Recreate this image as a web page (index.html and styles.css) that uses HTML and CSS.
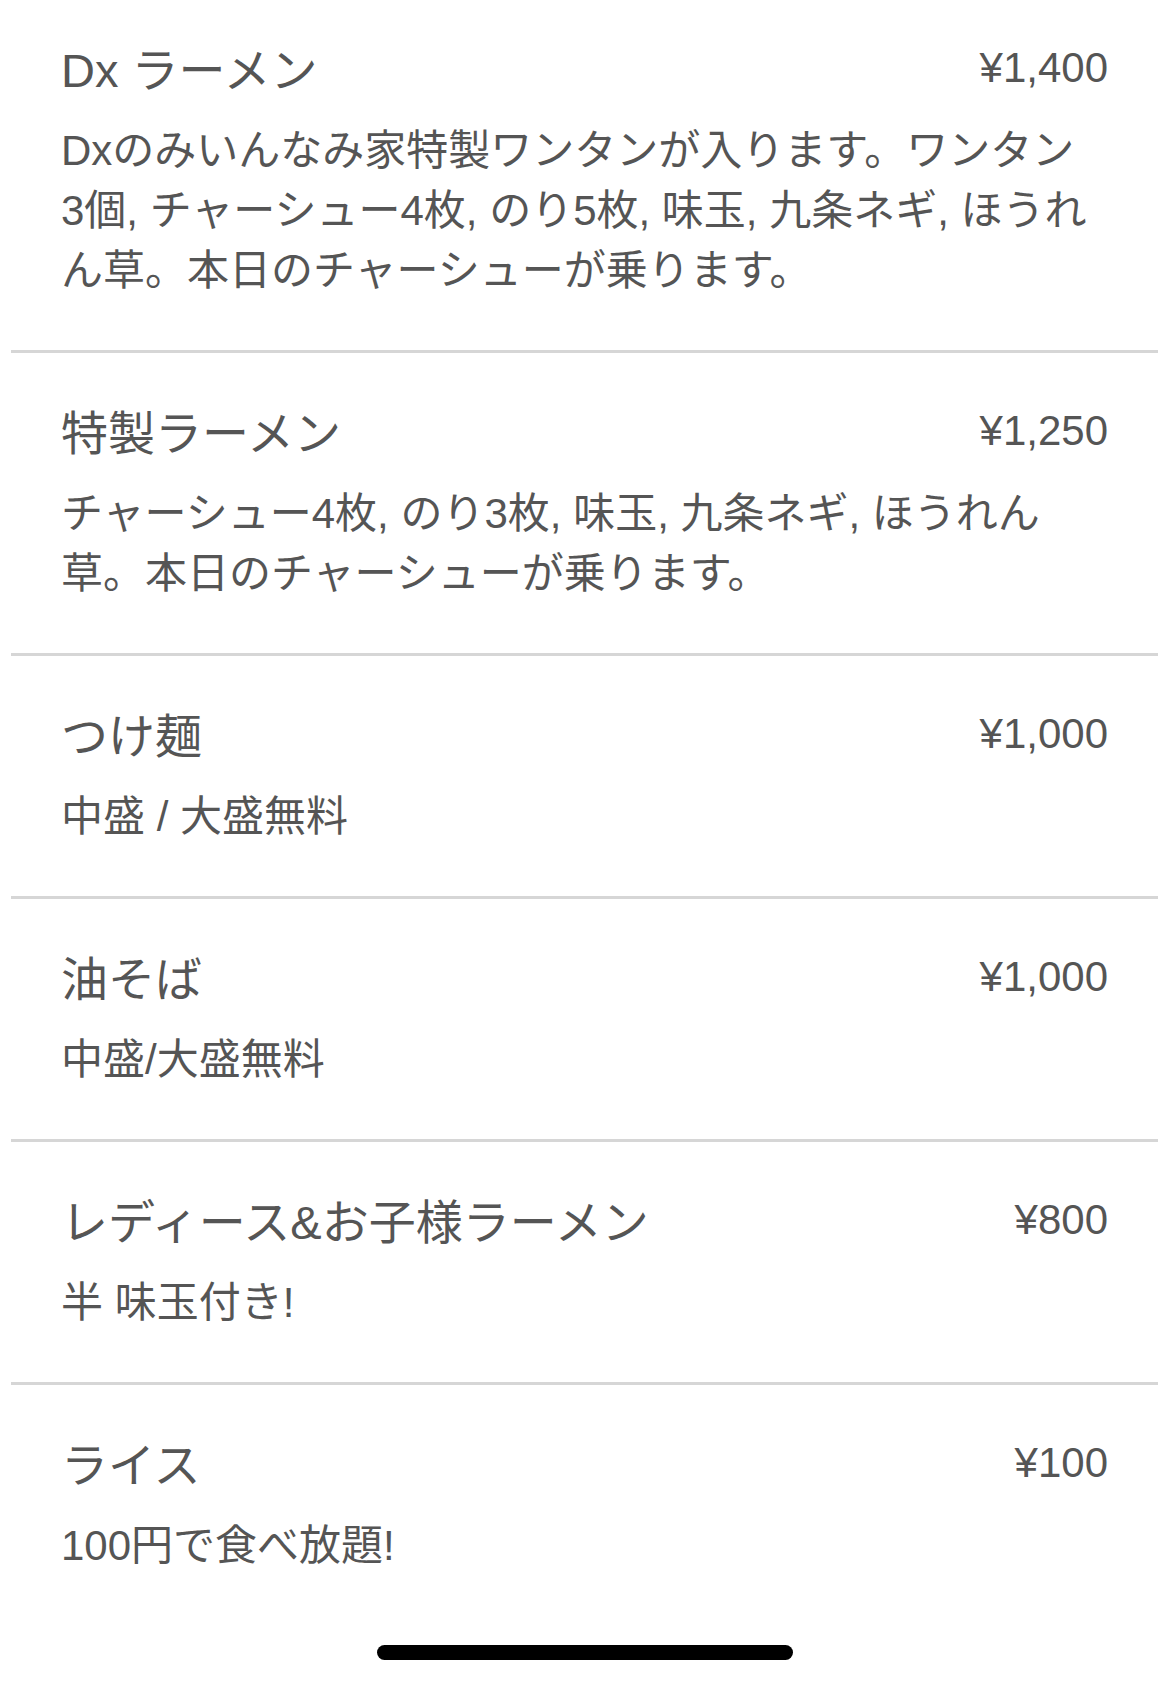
FILE: index.html
```html
<!DOCTYPE html>
<html lang="ja">
<head>
    <meta charset="UTF-8">
    <title>メニュー</title>
    <link rel="stylesheet" href="styles.css">
</head>
<body>
    <ul class="menu">
        <li class="item first">
            <div class="row">
                <span class="name">Dx ラーメン</span>
                <span class="price">¥1,400</span>
            </div>
            <p class="desc">Dxのみいんなみ家特製ワンタンが入ります。ワンタン3個, チャーシュー4枚, のり5枚, 味玉, 九条ネギ, ほうれん草。本日のチャーシューが乗ります。</p>
        </li>
        <li class="item">
            <div class="row">
                <span class="name">特製ラーメン</span>
                <span class="price">¥1,250</span>
            </div>
            <p class="desc">チャーシュー4枚, のり3枚, 味玉, 九条ネギ, ほうれん草。本日のチャーシューが乗ります。</p>
        </li>
        <li class="item">
            <div class="row">
                <span class="name">つけ麺</span>
                <span class="price">¥1,000</span>
            </div>
            <p class="desc">中盛 / 大盛無料</p>
        </li>
        <li class="item">
            <div class="row">
                <span class="name">油そば</span>
                <span class="price">¥1,000</span>
            </div>
            <p class="desc">中盛/大盛無料</p>
        </li>
        <li class="item">
            <div class="row">
                <span class="name">レディース&amp;お子様ラーメン</span>
                <span class="price">¥800</span>
            </div>
            <p class="desc">半 味玉付き!</p>
        </li>
        <li class="item last">
            <div class="row">
                <span class="name">ライス</span>
                <span class="price">¥100</span>
            </div>
            <p class="desc">100円で食べ放題!</p>
        </li>
    </ul>

    <div class="home-bar"></div>
</body>
</html>
```

FILE: styles.css
```css
html, body {
    margin: 0;
    padding: 0;
    background: #fff;
    color: #555;
    font-family: "Liberation Sans", "Noto Sans CJK JP", sans-serif;
    overflow: hidden;
}

.menu {
    list-style: none;
    margin: 0 12px 0 11px;
    padding: 0;
}

.item {
    padding: 51px 50px 49px;
    border-bottom: 3px solid #d6d6d6;
}

.item.first {
    padding-top: 41px;
}

.item.last {
    border-bottom: none;
}

.row {
    display: flex;
    justify-content: space-between;
    align-items: flex-start;
    margin-bottom: 20px;
}

.name {
    font-size: 47px;
    line-height: 60px;
}

.price {
    font-size: 42px;
    line-height: 54px;
}

.desc {
    margin: 0;
    padding-right: 13px;
    font-size: 42px;
    line-height: 60px;
}

.home-bar {
    position: fixed;
    left: 50%;
    bottom: 24px;
    width: 416px;
    height: 15px;
    margin-left: -208px;
    border-radius: 8px;
    background: #000;
}
```
